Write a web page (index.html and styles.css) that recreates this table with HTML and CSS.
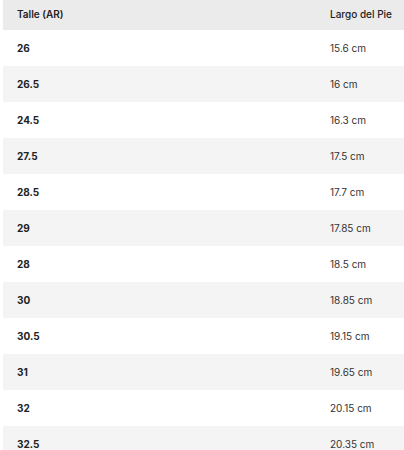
FILE: index.html
```html
<!DOCTYPE html>
<html>
<head>
<meta charset="utf-8">
<link rel="stylesheet" href="styles.css">
</head>
<body>
<div class="table">
  <div class="row head"><div class="c1">Talle (AR)</div><div class="c2">Largo del Pie</div></div>
  <div class="row"><div class="c1">26</div><div class="c2">15.6 cm</div></div>
  <div class="row alt"><div class="c1">26.5</div><div class="c2">16 cm</div></div>
  <div class="row"><div class="c1">24.5</div><div class="c2">16.3 cm</div></div>
  <div class="row alt"><div class="c1">27.5</div><div class="c2">17.5 cm</div></div>
  <div class="row"><div class="c1">28.5</div><div class="c2">17.7 cm</div></div>
  <div class="row alt"><div class="c1">29</div><div class="c2">17.85 cm</div></div>
  <div class="row"><div class="c1">28</div><div class="c2">18.5 cm</div></div>
  <div class="row alt"><div class="c1">30</div><div class="c2">18.85 cm</div></div>
  <div class="row"><div class="c1">30.5</div><div class="c2">19.15 cm</div></div>
  <div class="row alt"><div class="c1">31</div><div class="c2">19.65 cm</div></div>
  <div class="row"><div class="c1">32</div><div class="c2">20.15 cm</div></div>
  <div class="row alt"><div class="c1">32.5</div><div class="c2">20.35 cm</div></div>
</div>
</body>
</html>
```
FILE: styles.css
```css
html, body {
  margin: 0;
  padding: 0;
  background: #ffffff;
  overflow: hidden;
}
body {
  font-family: Inter, "Noto Sans", sans-serif;
  color: #222;
}
.table {
  margin-left: 3px;
  width: 420px;
}
.row {
  display: flex;
  align-items: center;
  height: 36px;
  font-size: 10px;
}
.row.head {
  height: 30px;
  background: #ebebeb;
  padding-bottom: 3px;
  box-sizing: border-box;
}
.row.alt {
  background: #f4f4f4;
}
.c1 {
  width: 327px;
  padding-left: 14px;
  box-sizing: border-box;
  font-weight: 700;
}
.c2 {
  font-weight: 400;
  color: #333;
}
.head .c1 {
  font-weight: 600;
}
.head .c2 {
  font-weight: 500;
  color: #222;
}
```
